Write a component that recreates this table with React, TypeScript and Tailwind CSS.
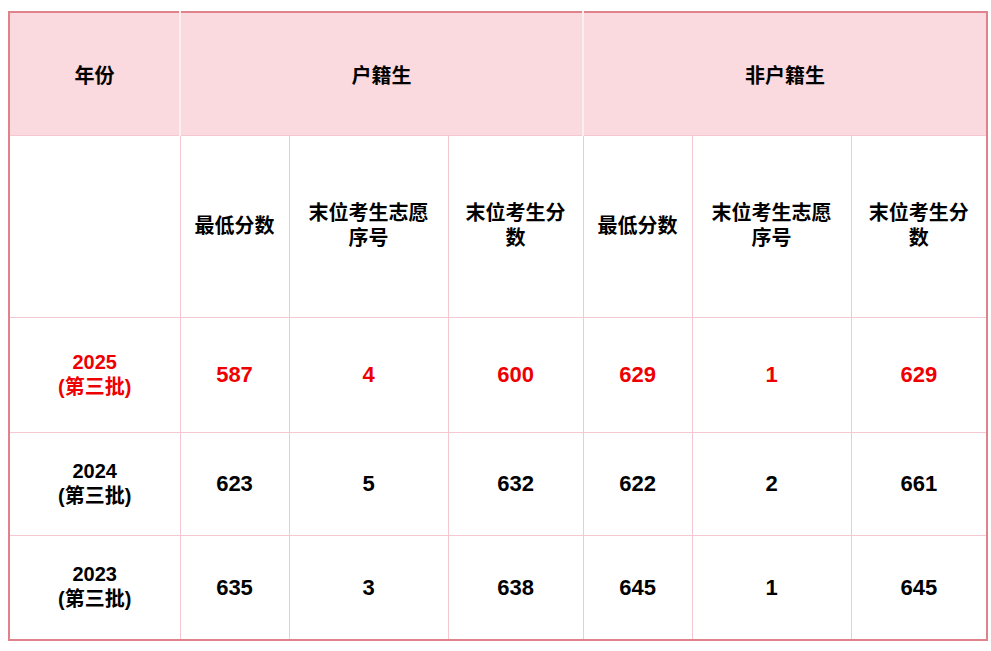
const headCell = "border border-[#f5c8d1] px-3 text-center align-middle";

const rows = [
  { year: "2025", vals: ["587", "4", "600", "629", "1", "629"], red: true, h: "h-[115px]" },
  { year: "2024", vals: ["623", "5", "632", "622", "2", "661"], red: false, h: "h-[103px]" },
  { year: "2023", vals: ["635", "3", "638", "645", "1", "645"], red: false, h: "h-[105px]" },
];

const subHeads = ["最低分数", "末位考生志愿序号", "末位考生分数", "最低分数", "末位考生志愿序号", "末位考生分数"];

export default function App() {
  return (
    <div className="bg-white w-[991px] h-[651px] pt-[11px] pl-[8px]" style={{ fontFamily: '"Liberation Sans", "Noto Sans CJK SC", sans-serif' }}>
      <table className="table-fixed border-collapse w-[978px] border-2 border-[#e0828c] font-bold text-black">
        <colgroup>
          <col className="w-[171px]" />
          <col className="w-[109px]" />
          <col className="w-[159px]" />
          <col className="w-[135px]" />
          <col className="w-[109px]" />
          <col className="w-[159px]" />
          <col className="w-[136px]" />
        </colgroup>
        <thead>
          <tr className="h-[123px] bg-[#fadade] text-[20px]">
            <th className="border-b border-b-[#f5c8d1] border-r-2 border-r-[#fdeef0] text-center pt-1">年份</th>
            <th colSpan={3} className="border-b border-b-[#f5c8d1] border-r-2 border-r-[#fdeef0] text-center pt-1">户籍生</th>
            <th colSpan={3} className="border-b border-b-[#f5c8d1] text-center pt-1">非户籍生</th>
          </tr>
        </thead>
        <tbody>
          <tr className="h-[182px] text-[20px] leading-[25px]">
            <td className={headCell}></td>
            {subHeads.map((s, i) => (
              <td key={i} className={headCell}>{s}</td>
            ))}
          </tr>
          {rows.map((r) => (
            <tr key={r.year} className={`${r.h} ${r.red ? "text-[#ee0000]" : "text-black"}`}>
              <td className={`${headCell} text-[20px] leading-[25px]`}>
                {r.year}
                <br />
                (第三批)
              </td>
              {r.vals.map((v, i) => (
                <td key={i} className={`${headCell} text-[22px]`}>{v}</td>
              ))}
            </tr>
          ))}
        </tbody>
      </table>
    </div>
  );
}
